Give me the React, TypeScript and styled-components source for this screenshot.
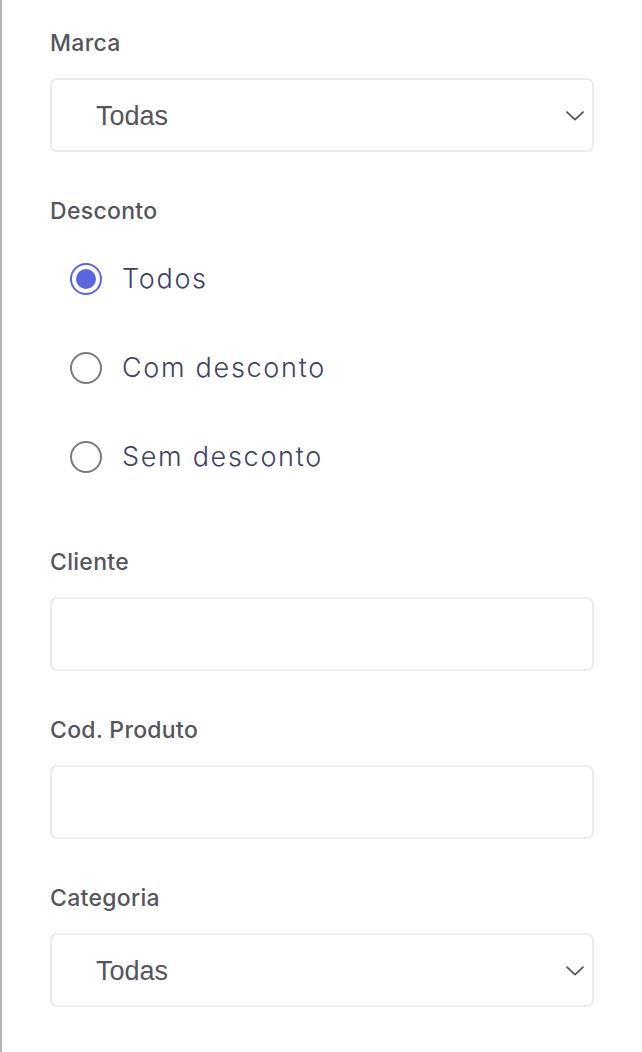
import styled, { createGlobalStyle } from 'styled-components';
import { useState } from 'react';

const GlobalStyle = createGlobalStyle`
  html, body {
    margin: 0;
    padding: 0;
    background: #ffffff;
  }
`;

const discountOptions = ['Todos', 'Com desconto', 'Sem desconto'];

const ChevronDown: React.FC = () => (
  <svg width="18" height="10" viewBox="0 0 18 10" fill="none">
    <path d="M1 1.2L9 8.6L17 1.2" stroke="#55565c" strokeWidth="1.8" strokeLinecap="round" strokeLinejoin="round" />
  </svg>
);

const SelectField: React.FC<{ label: string; value: string }> = ({ label, value }) => (
  <Field>
    <Label>{label}</Label>
    <SelectBox>
      <span>{value}</span>
      <ChevronDown />
    </SelectBox>
  </Field>
);

const InputField: React.FC<{ label: string }> = ({ label }) => (
  <Field>
    <Label>{label}</Label>
    <TextBox type="text" />
  </Field>
);

const App: React.FC = () => {
  const [discount, setDiscount] = useState('Todos');

  return (
    <>
      <GlobalStyle />
      <Panel>
        <SelectField label="Marca" value="Todas" />
        <Field>
          <Label>Desconto</Label>
          <RadioList>
            {discountOptions.map((option) => (
              <RadioRow key={option} onClick={() => setDiscount(option)}>
                <RadioCircle $checked={discount === option} />
                <RadioText>{option}</RadioText>
              </RadioRow>
            ))}
          </RadioList>
        </Field>
        <InputField label="Cliente" />
        <InputField label="Cod. Produto" />
        <SelectField label="Categoria" value="Todas" />
      </Panel>
    </>
  );
};
export default App;

const Panel = styled.div`
  box-sizing: border-box;
  width: 642px;
  min-height: 1052px;
  border-left: 2px solid #b4b4b4;
  padding: 28px 48px 0 48px;
  display: flex;
  flex-direction: column;
  gap: 44px;
`;

const Field = styled.div`
  display: flex;
  flex-direction: column;
  gap: 20px;
`;

const Label = styled.label`
  font-family: Inter, 'Open Sans', sans-serif;
  font-size: 23px;
  line-height: 30px;
  font-weight: 500;
  letter-spacing: 0.3px;
  color: #55565c;
`;

const boxStyles = `
  box-sizing: border-box;
  width: 100%;
  height: 74px;
  border: 2px solid #ebebf0;
  border-radius: 7px;
  background: #ffffff;
`;

const SelectBox = styled.div`
  ${boxStyles}
  display: flex;
  align-items: center;
  justify-content: space-between;
  padding: 2px 8px 0 44px;
  font-family: 'Liberation Sans', Arial, sans-serif;
  font-size: 27px;
  color: #55565c;
`;

const TextBox = styled.input`
  ${boxStyles}
  display: block;
  outline: none;
`;

const RadioList = styled.div`
  display: flex;
  flex-direction: column;
  gap: 54px;
  margin-top: 15px;
  padding-left: 20px;
  padding-bottom: 29px;
`;

const RadioRow = styled.div`
  display: flex;
  align-items: center;
  gap: 20px;
  height: 35px;
  cursor: pointer;
`;

const RadioCircle = styled.span<{ $checked: boolean }>`
  box-sizing: border-box;
  width: 32px;
  height: 32px;
  border-radius: 50%;
  border: 2px solid ${({ $checked }) => ($checked ? '#5b66dc' : '#7a7a7a')};
  display: flex;
  align-items: center;
  justify-content: center;

  &::after {
    content: '';
    width: 20px;
    height: 20px;
    border-radius: 50%;
    background: #5b66dc;
    display: ${({ $checked }) => ($checked ? 'block' : 'none')};
  }
`;

const RadioText = styled.span`
  font-family: Inter, 'Open Sans', sans-serif;
  font-size: 27px;
  font-weight: 300;
  letter-spacing: 1.7px;
  color: #3e4366;
`;
